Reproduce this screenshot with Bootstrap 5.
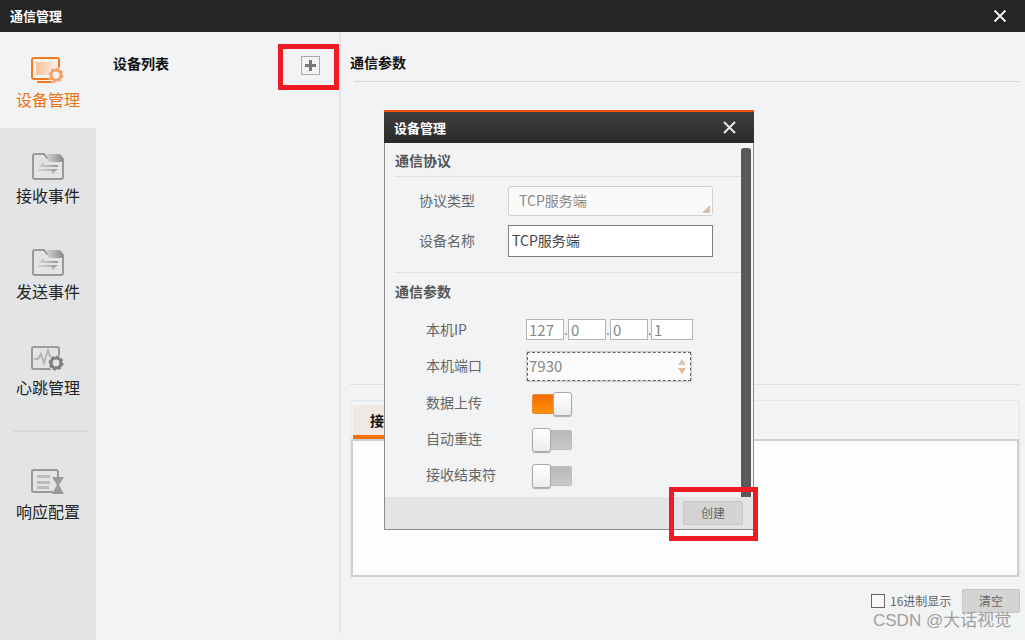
<!DOCTYPE html>
<html lang="zh-CN">
<head>
    <meta charset="UTF-8">
    <title>通信管理</title>
    <link href="https://cdn.jsdelivr.net/npm/bootstrap@5.3.0/dist/css/bootstrap.min.css" rel="stylesheet">
    <style>
        html, body { height: 640px; overflow: hidden; }
        body { background: #f1f3f5; font-family: "Noto Sans CJK SC", "Liberation Sans", sans-serif; color: #111; position: relative; }
        .title-bar { height: 32px; background: #252525; color: #fff; font-size: 13px; font-weight: 700; padding: 0 10px 0 10px; }
        .shell { height: 608px; }
        .side-nav { width: 96px; background: #e3e4e6; }
        .side-item { height: 96px; padding-top: 24px; font-size: 16px; line-height: 22px; color: #222; }
        .side-item svg { display: block; margin: 0 auto 4px; }
        .side-item.is-active { background: #f1f3f5; color: #f07010; }
        .side-rule { height: 2px; background: #d8d9db; margin: 14px 9px 12px 13px; }
        .list-pane { width: 245px; border-right: 2px solid #e2e3e5; height: 601px; padding: 20px 0 0 17px; font-size: 14px; font-weight: 600; line-height: 22px; }
        .plus-btn { width: 19px; height: 19px; border: 1px solid #aaa; position: absolute; left: 301px; top: 56px; }
        .main-pane { padding: 0 5px 0 9px; }
        .pane-head { font-size: 14px; font-weight: 600; line-height: 20px; height: 50px; padding-top: 20px; border-bottom: 1px solid #d4d5d7; margin-left: 4px; text-indent: -4px; }
        .pane-gap { height: 303px; border-bottom: 1px solid #dfe0e2; }
        .tab-box { margin: 15px 0 0 0; height: 177px; border: 1px solid #e4e5e7; border-bottom: 0; }
        .tab-strip { height: 38px; padding: 4px 0 0 2px; }
        .tab-on { width: 120px; height: 34px; background: #f0e8e2; border-bottom: 4px solid #f96f06; font-size: 14px; font-weight: 600; padding: 5px 0 0 17px; line-height: 20px; }
        .tab-body { height: 138px; background: #fdfdfd; border: 2px solid #cfd0d2; }
        .foot-row { height: 24px; margin-top: 12px; font-size: 12px; color: #666; }
        .box-check { width: 14px; height: 14px; border: 1px solid #666; background: #f8f8f8; margin-right: 5px; }
        .foot-label { width: 62px; white-space: nowrap; }
        .grey-btn { background: #d5d4d2; border: 1px solid #c6c6c6; border-radius: 2px; color: #666; font-size: 12px; }
        .clear-btn { width: 58px; height: 24px; margin-left: 10px; }
        .dlg { position: absolute; left: 384px; top: 110px; width: 370px; height: 420px; background: #f1f3f5; border: 1px solid #8c8c8c; border-top: 0; }
        .dlg-head { height: 33px; margin: 0 -1px; border-top: 2px solid #f2500c; background: linear-gradient(#3f3f3f, #2a2a2a); color: #fff; font-size: 13px; font-weight: 700; padding: 0 18px 0 10px; }
        .dlg-body { height: 354px; padding: 5px 13px 0 10px; position: relative; }
        .dlg-scroll { position: absolute; left: 356px; top: 5px; width: 10px; height: 349px; background: #58595b; border-radius: 3px 3px 0 0; }
        .sect-title { font-size: 14px; font-weight: 600; color: #555; line-height: 20px; height: 29px; padding-top: 2px; border-bottom: 1px solid #e0e1e3; margin-right: -3px; }
        .sect-plain { border-bottom: 0; height: 47px; padding-top: 8px; border-top: 1px solid #e0e1e3; margin-top: 15px; }
        .form-line { font-size: 14px; color: #666; white-space: nowrap; }
        .gap-9 { margin-top: 9px; }
        .gap-10 { margin-top: 10px; }
        .gap-11 { margin-top: 11px; }
        .gap-12 { margin-top: 12px; }
        .lbl-a { width: 97px; padding-left: 24px; margin-top: -2px; }
        .lbl-b { width: 107px; padding-left: 31px; }
        .lbl-port { margin-top: -2px; }
        .lbl-up { margin-top: -3px; }
        .fake-select { width: 205px; height: 30px; background: #fafafa; border: 1px solid #cfcfcf; border-radius: 3px; color: #888; padding-left: 10px; line-height: 26px; position: relative; }
        .fake-select::after { content: ""; position: absolute; right: 2px; bottom: 2px; border-left: 8px solid transparent; border-bottom: 8px solid #d8bda8; }
        .fake-input { width: 205px; height: 32px; background: #fff; border: 1px solid #808080; color: #444; padding-left: 3px; line-height: 28px; }
        .ip-cell { width: 38px; height: 21px; background: #fff; border: 1px solid #b4b4b4; color: #888; line-height: 19px; padding-left: 2px; font-size: 15px; }
        .ip-last { width: 42px; }
        .ip-dot { width: 4px; font-size: 12px; color: #777; line-height: 21px; text-align: center; }
        .ip-dot-thin { width: 3px; }
        .port-box { width: 166px; height: 31px; background: #fbfbfb; border: 1px solid #c8c8c8; outline: 1px dashed #666; outline-offset: -2px; border-radius: 2px; color: #888; padding-left: 2px; line-height: 27px; position: relative; font-size: 15px; }
        .spin-up, .spin-down { position: absolute; right: 5px; border-left: 4px solid transparent; border-right: 4px solid transparent; }
        .spin-up { top: 7px; border-bottom: 6px solid #dcc3b0; }
        .spin-down { top: 16px; border-top: 6px solid #e0b898; }
        .sw { width: 40px; height: 24px; margin-left: 30px; position: relative; }
        .sw-track { position: absolute; left: 0; right: 0; top: 2px; bottom: 2px; border-radius: 2px; background: linear-gradient(#b8b8b8, #cacaca); border: 1px solid #bdbdbd; }
        .sw.is-on .sw-track { background: linear-gradient(#f56a02, #ff9000); border-color: #f08a30; }
        .sw-knob { position: absolute; top: 0; left: 0; width: 19px; height: 24px; background: linear-gradient(#fff, #ececec); border: 1px solid #a9a9a9; border-radius: 3px; box-shadow: 0 1px 1px #aaa; }
        .sw.is-on .sw-knob { left: 21px; }
        .dlg-foot { height: 32px; background: #e3e4e6; padding-right: 10px; }
        .create-btn { width: 60px; height: 24px; }
        .red-mark { position: absolute; border: 5px solid #ed1c24; }
        .mark-plus { left: 278px; top: 44px; width: 61px; height: 46px; }
        .mark-create { left: 669px; top: 487px; width: 89px; height: 54px; }
        .water-mark { position: absolute; left: 873px; top: 611px; font-family: "Liberation Sans", "Noto Sans CJK SC", sans-serif; font-size: 17px; line-height: 20px; color: #a0a0a0; white-space: nowrap; }
    </style>
</head>
<body>
    <div class="title-bar d-flex align-items-center justify-content-between">
        <span>通信管理</span>
        <svg width="14" height="14" viewBox="0 0 14 14" class="me-2"><path d="M1.5 1.5l11 11M12.5 1.5l-11 11" stroke="#eee" stroke-width="2"/></svg>
    </div>
    <div class="shell d-flex">
        <div class="side-nav flex-shrink-0">
            <div class="side-item is-active text-center">
                <svg width="34" height="28" viewBox="0 0 34 28">
                    <defs><linearGradient id="fillOrange" x1="0" x2="1"><stop offset="0" stop-color="#f9c298"/><stop offset="1" stop-color="#fde9d8"/></linearGradient></defs>
                    <rect x="1" y="2" width="27" height="21" rx="2" fill="none" stroke="#f47a1f" stroke-width="2"/>
                    <rect x="5" y="6" width="19" height="13" fill="url(#fillOrange)"/>
                    <path d="M6 26h20" stroke="#f47a1f" stroke-width="2"/>
                    <circle cx="25" cy="19" r="8" fill="#f1f3f5"/>
                    <circle cx="25" cy="19" r="5" fill="none" stroke="#f6a36b" stroke-width="3.2"/>
                    <circle cx="25" cy="19" r="6.6" fill="none" stroke="#f6a36b" stroke-width="1.8" stroke-dasharray="2.6 2.6"/>
                </svg>
                设备管理
            </div>
            <div class="side-item text-center">
                <svg width="32" height="28" viewBox="0 0 32 28">
                    <defs>
                        <linearGradient id="tabGrey" x1="0" x2="1"><stop offset="0" stop-color="#d4d4d4"/><stop offset="1" stop-color="#8e8e8e"/></linearGradient>
                        <linearGradient id="arrowGrey" x1="0" x2="1"><stop offset="0" stop-color="#d2d2d2"/><stop offset="1" stop-color="#9c9c9c"/></linearGradient>
                    </defs>
                    <path d="M1 4a2 2 0 0 1 2-2h9l3 4h14a2 2 0 0 1 2 2v17a2 2 0 0 1-2 2H3a2 2 0 0 1-2-2z" fill="none" stroke="#9a9a9a" stroke-width="2"/>
                    <path d="M14 2h12a5 5 0 0 1 5 5v3H17z" fill="url(#tabGrey)"/>
                    <path d="M6 15l6-5v3h14v2z" fill="url(#arrowGrey)"/>
                    <path d="M6 17h20l-6 5v-3H6z" fill="url(#arrowGrey)"/>
                </svg>
                接收事件
            </div>
            <div class="side-item text-center">
                <svg width="32" height="28" viewBox="0 0 32 28">
                    <path d="M1 4a2 2 0 0 1 2-2h9l3 4h14a2 2 0 0 1 2 2v17a2 2 0 0 1-2 2H3a2 2 0 0 1-2-2z" fill="none" stroke="#9a9a9a" stroke-width="2"/>
                    <path d="M14 2h12a5 5 0 0 1 5 5v3H17z" fill="url(#tabGrey)"/>
                    <path d="M6 15l6-5v3h14v2z" fill="url(#arrowGrey)"/>
                    <path d="M6 17h20l-6 5v-3H6z" fill="url(#arrowGrey)"/>
                </svg>
                发送事件
            </div>
            <div class="side-item text-center">
                <svg width="34" height="28" viewBox="0 0 34 28">
                    <rect x="1" y="3" width="27" height="22" rx="2" fill="none" stroke="#9a9a9a" stroke-width="2"/>
                    <path d="M3 15h4l3-5 3 9 4-13 3 9h3" fill="none" stroke="#b5b5b5" stroke-width="2"/>
                    <circle cx="25" cy="19" r="8" fill="#e3e4e6"/>
                    <circle cx="25" cy="19" r="5" fill="none" stroke="#808080" stroke-width="3.200"/>
                    <circle cx="25" cy="19" r="6.600" fill="none" stroke="#808080" stroke-width="1.800" stroke-dasharray="2.600 2.600"/>
                </svg>
                心跳管理
            </div>
            <div class="side-rule"></div>
            <div class="side-item text-center">
                <svg width="34" height="28" viewBox="0 0 34 28">
                    <path d="M22 24H3a2 2 0 0 1-2-2V4a2 2 0 0 1 2-2h22a2 2 0 0 1 2 2v5" fill="none" stroke="#9a9a9a" stroke-width="2"/>
                    <path d="M6 7h13v3H6zM6 13h13v3H6zM6 18h12v3H6z" fill="#bcbcbc"/>
                    <path d="M21 9h12l-5 8 5 9H21l5-9z" fill="#9a9a9a"/>
                </svg>
                响应配置
            </div>
        </div>
        <div class="list-pane flex-shrink-0">设备列表</div>
        <div class="main-pane flex-grow-1">
            <div class="pane-head">通信参数</div>
            <div class="pane-gap"></div>
            <div class="tab-box">
                <div class="tab-strip"><div class="tab-on">接收</div></div>
                <div class="tab-body"></div>
            </div>
            <div class="foot-row d-flex align-items-center justify-content-end">
                <span class="box-check"></span>
                <span class="foot-label">16进制显示</span>
                <button type="button" class="grey-btn clear-btn p-0">清空</button>
            </div>
        </div>
    </div>

    <div class="plus-btn d-flex align-items-center justify-content-center">
        <svg width="13" height="13" viewBox="0 0 13 13"><path d="M6.500 1v11M1 6.500h11" stroke="#777" stroke-width="3"/></svg>
    </div>

    <div class="dlg">
        <div class="dlg-head d-flex align-items-center justify-content-between">
            <span>设备管理</span>
            <svg width="13" height="13" viewBox="0 0 13 13"><path d="M1 1l11 11M12 1L1 12" stroke="#e8e8e8" stroke-width="2"/></svg>
        </div>
        <div class="dlg-body">
            <div class="dlg-scroll"></div>
            <div class="sect-title">通信协议</div>
            <div class="form-line d-flex align-items-center gap-9">
                <span class="lbl-a">协议类型</span>
                <span class="fake-select flex-shrink-0 ms-3">TCP服务端</span>
            </div>
            <div class="form-line d-flex align-items-center gap-9">
                <span class="lbl-a">设备名称</span>
                <span class="fake-input flex-shrink-0 ms-3">TCP服务端</span>
            </div>
            <div class="sect-title sect-plain">通信参数</div>
            <div class="form-line d-flex align-items-center">
                <span class="lbl-b flex-shrink-0">本机IP</span>
                <span class="ms-4 d-flex">
                    <span class="ip-cell">127</span><span class="ip-dot">.</span>
                    <span class="ip-cell">0</span><span class="ip-dot">.</span>
                    <span class="ip-cell">0</span><span class="ip-dot ip-dot-thin">.</span>
                    <span class="ip-cell ip-last">1</span>
                </span>
            </div>
            <div class="form-line d-flex align-items-center gap-11">
                <span class="lbl-b flex-shrink-0 lbl-port">本机端口</span>
                <span class="port-box ms-4">7930<i class="spin-up"></i><i class="spin-down"></i></span>
            </div>
            <div class="form-line d-flex align-items-center gap-10">
                <span class="lbl-b flex-shrink-0 lbl-up">数据上传</span>
                <span class="sw is-on"><i class="sw-track"></i><i class="sw-knob"></i></span>
            </div>
            <div class="form-line d-flex align-items-center gap-12">
                <span class="lbl-b flex-shrink-0 lbl-up">自动重连</span>
                <span class="sw"><i class="sw-track"></i><i class="sw-knob"></i></span>
            </div>
            <div class="form-line d-flex align-items-center gap-12">
                <span class="lbl-b flex-shrink-0 lbl-up">接收结束符</span>
                <span class="sw"><i class="sw-track"></i><i class="sw-knob"></i></span>
            </div>
        </div>
        <div class="dlg-foot d-flex align-items-center justify-content-end">
            <button type="button" class="grey-btn create-btn p-0">创建</button>
        </div>
    </div>

    <div class="red-mark mark-plus"></div>
    <div class="red-mark mark-create"></div>
    <div class="water-mark">CSDN @大话视觉</div>
    <script src="https://cdn.jsdelivr.net/npm/bootstrap@5.3.0/dist/js/bootstrap.bundle.min.js"></script>
</body>
</html>
